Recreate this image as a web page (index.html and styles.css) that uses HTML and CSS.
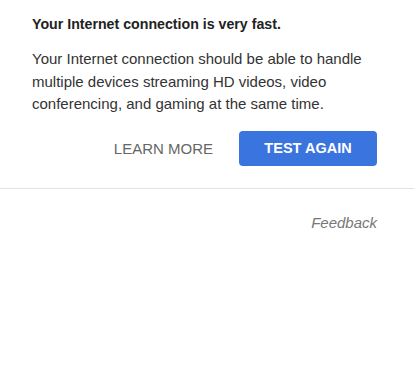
FILE: index.html
```html
<!DOCTYPE html>
<html>
<head>
<meta charset="utf-8">
<link rel="stylesheet" href="styles.css">
</head>
<body>
<div class="card">
  <h2 class="title">Your Internet connection is very fast.</h2>
  <p class="desc">Your Internet connection should be able to handle multiple devices streaming HD videos, video conferencing, and gaming at the same time.</p>
  <div class="actions">
    <button class="btn btn-text">LEARN MORE</button>
    <button class="btn btn-primary">TEST AGAIN</button>
  </div>
</div>
<div class="footer">
  <span class="feedback">Feedback</span>
</div>
</body>
</html>
```
FILE: styles.css
```css
html, body {
  margin: 0;
  padding: 0;
  background: #fff;
  font-family: "Liberation Sans", Arial, sans-serif;
}
.card {
  padding: 15px 37px 22px 32px;
  border-bottom: 1px solid #e2e2e2;
}
.title {
  margin: 0;
  font-size: 14.2px;
  font-weight: bold;
  color: #222;
  line-height: 18px;
}
.desc {
  margin: 15px 0 0;
  font-size: 15px;
  line-height: 22.5px;
  color: #333;
}
.actions {
  display: flex;
  justify-content: flex-end;
  align-items: center;
  gap: 26px;
  margin-top: 15px;
}
.btn {
  font-family: inherit;
  font-size: 15px;
  border: none;
  cursor: pointer;
}
.btn-text {
  background: none;
  color: #666;
  padding: 0;
}
.btn-primary {
  width: 138px;
  height: 35px;
  background: #3a74df;
  color: #fff;
  border-radius: 4px;
  font-weight: bold;
  font-size: 14.5px;
}
.footer {
  display: flex;
  justify-content: flex-end;
  padding: 25px 37px 0 0;
}
.feedback {
  font-style: italic;
  font-size: 15px;
  color: #777;
}
```
